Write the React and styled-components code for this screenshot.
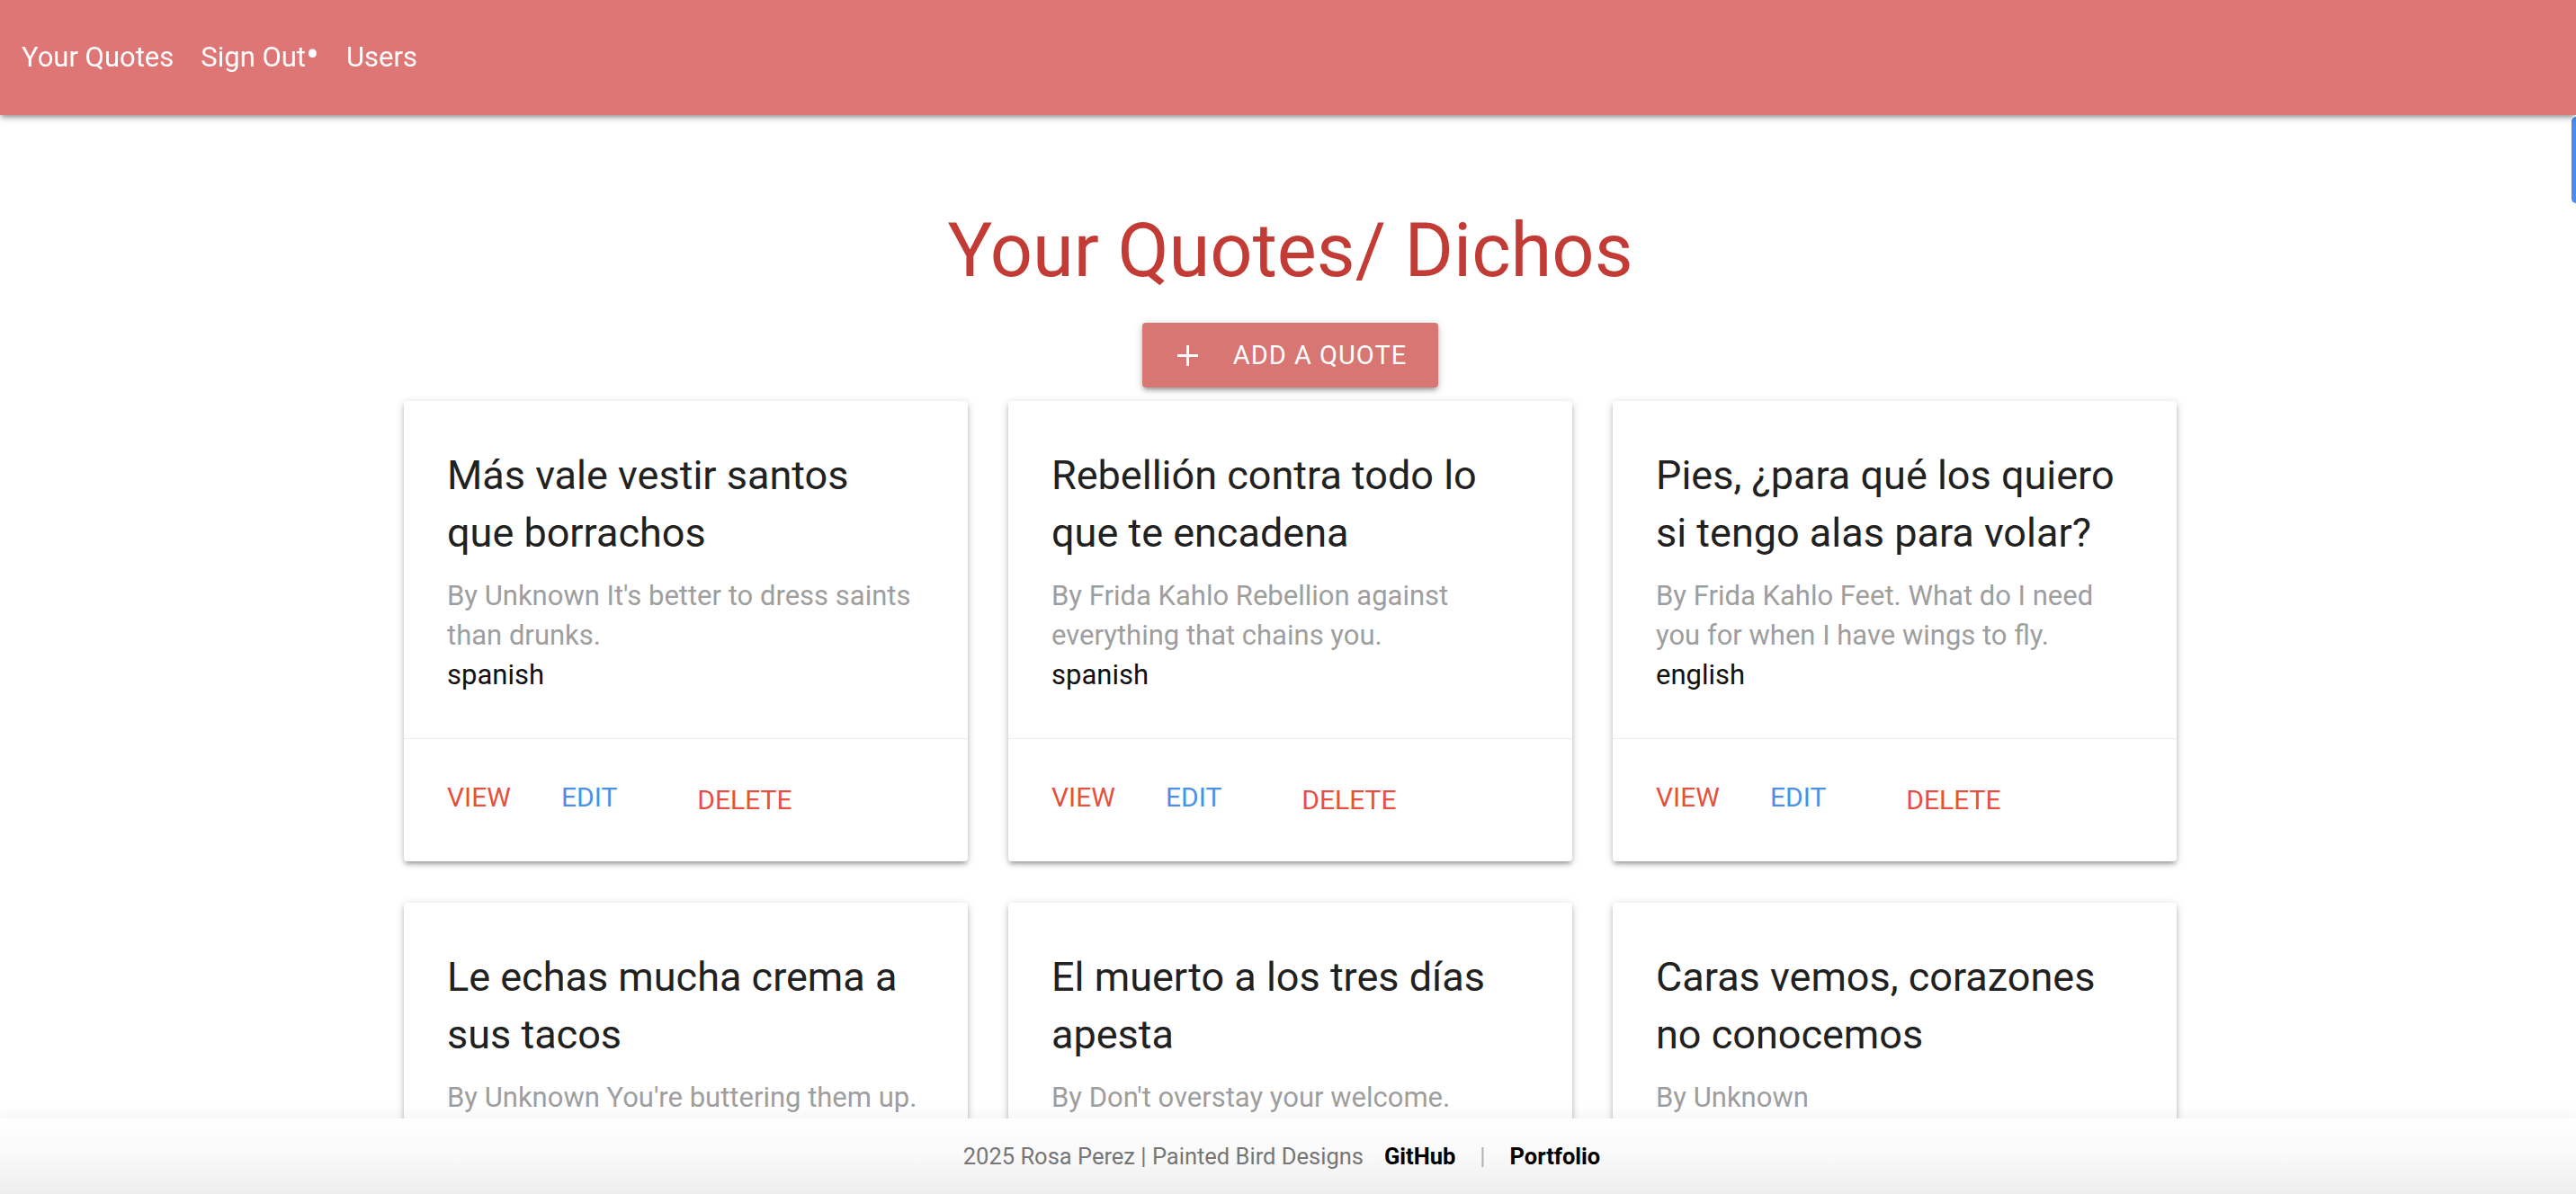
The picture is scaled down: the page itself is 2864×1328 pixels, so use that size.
import React from "react";
import styled, { createGlobalStyle } from "styled-components";

const GlobalStyle = createGlobalStyle`
  html, body {
    margin: 0;
    height: 100%;
    background: #fff;
  }
  body {
    font-family: Roboto, "Liberation Sans", sans-serif;
  }
  * {
    box-sizing: border-box;
  }
`;

const shadow = `0 4px 4px 0 rgba(0, 0, 0, 0.14), 0 6px 2px -4px rgba(0, 0, 0, 0.12),
    0 2px 10px 0 rgba(0, 0, 0, 0.2)`;

const Page = styled.div`
  height: 100vh;
  display: flex;
  flex-direction: column;
  overflow: hidden;
`;

const Nav = styled.nav`
  position: relative;
  z-index: 2;
  flex-shrink: 0;
  height: 128px;
  background: #df7676;
  box-shadow: ${shadow};
`;

const NavList = styled.ul`
  display: flex;
  margin: 0;
  padding: 0 0 0 9px;
  list-style: none;
`;

const NavLink = styled.a`
  display: block;
  padding: 0 15px;
  color: #fff;
  font-size: 31px;
  line-height: 128px;
  text-decoration: none;
`;

const Bullet = styled.span`
  font-size: 44px;
  line-height: 0;
  vertical-align: -2px;
`;

const Main = styled.main`
  flex: 1;
  overflow: hidden;
  display: flex;
  flex-direction: column;
  align-items: center;
  padding-left: 5px;

  & > * {
    flex-shrink: 0;
  }
`;

const Title = styled.h1`
  margin: 105px 0 0;
  font-size: 83px;
  font-weight: 400;
  line-height: 92px;
  color: #c23b35;
`;

const AddButton = styled.button`
  display: flex;
  align-items: center;
  gap: 39px;
  height: 72px;
  margin-top: 34px;
  padding: 0 35px 0 39px;
  border: none;
  border-radius: 4px;
  background: #d77672;
  color: #fff;
  font-family: Roboto, "Liberation Sans", sans-serif;
  font-size: 29px;
  letter-spacing: 1px;
  text-transform: uppercase;
  box-shadow: ${shadow};
`;

const Grid = styled.div`
  display: grid;
  grid-template-columns: repeat(3, 627px);
  column-gap: 45px;
  row-gap: 46px;
  margin-top: 15px;
`;

const Card = styled.div`
  background: #fff;
  border-radius: 4px;
  box-shadow: ${shadow};
`;

const CardContent = styled.div`
  padding: 51px 48px 48px;
`;

const CardTitle = styled.span`
  display: block;
  margin-bottom: 16px;
  font-size: 45px;
  line-height: 64px;
  color: #212121;
  white-space: pre-line;
`;

const CardText = styled.p`
  margin: 0;
  font-size: 31px;
  line-height: 44px;
  color: ${(p) => (p.$muted ? "#9e9e9e" : "#111")};
  white-space: pre-line;
`;

const CardAction = styled.div`
  display: flex;
  align-items: center;
  height: 137px;
  padding: 28px 48px 36px;
  border-top: 1px solid rgba(160, 160, 160, 0.2);
`;

const ActionLink = styled.a`
  margin-right: 56px;
  font-size: 30px;
  color: ${(p) => p.$color};
  text-transform: uppercase;
  text-decoration: none;
`;

const DeleteButton = styled.button`
  height: 72px;
  padding: 6px 33px 0;
  border: none;
  background: transparent;
  font-family: Roboto, "Liberation Sans", sans-serif;
  font-size: 30px;
  color: #e5503f;
  text-transform: uppercase;
`;

const Footer = styled.footer`
  position: relative;
  z-index: 2;
  flex-shrink: 0;
  height: 84px;
  display: flex;
  align-items: center;
  justify-content: center;
  padding-right: 14px;
  font-size: 25.5px;
  background: linear-gradient(180deg, #ffffff 0%, #fafafa 45%, #eeeeee 100%);
  box-shadow: 0 -6px 14px rgba(0, 0, 0, 0.04);
`;

const Copy = styled.span`
  color: #767676;
`;

const FooterLink = styled.a`
  color: #000;
  font-weight: 700;
  text-decoration: none;
  margin-left: ${(p) => p.$gap || 0}px;
`;

const Sep = styled.span`
  margin: 0 27px;
  color: #b0b0b0;
`;

const SideTab = styled.div`
  position: fixed;
  top: 130px;
  right: 0;
  width: 5px;
  height: 96px;
  border-radius: 8px 0 0 8px;
  background: #4a8cf0;
`;

const PlusIcon = () => (
  <svg width="23" height="23" viewBox="0 0 23 23">
    <path d="M11.5 0v23M0 11.5h23" stroke="#fff" strokeWidth="3" />
  </svg>
);

const quotes = [
  {
    title: "Más vale vestir santos\nque borrachos",
    text: "By Unknown It's better to dress saints\nthan drunks.",
    lang: "spanish",
  },
  {
    title: "Rebellión contra todo lo\nque te encadena",
    text: "By Frida Kahlo Rebellion against\neverything that chains you.",
    lang: "spanish",
  },
  {
    title: "Pies, ¿para qué los quiero\nsi tengo alas para volar?",
    text: "By Frida Kahlo Feet. What do I need\nyou for when I have wings to fly.",
    lang: "english",
  },
  {
    title: "Le echas mucha crema a\nsus tacos",
    text: "By Unknown You're buttering them up.",
    lang: "spanish",
  },
  {
    title: "El muerto a los tres días\napesta",
    text: "By Don't overstay your welcome.",
    lang: "spanish",
  },
  {
    title: "Caras vemos, corazones\nno conocemos",
    text: "By Unknown",
    lang: "spanish",
  },
];

const QuoteCard = ({ quote }) => (
  <Card>
    <CardContent>
      <CardTitle>{quote.title}</CardTitle>
      <CardText $muted>{quote.text}</CardText>
      <CardText>{quote.lang}</CardText>
    </CardContent>
    <CardAction>
      <ActionLink href="#" $color="#e5503f">View</ActionLink>
      <ActionLink href="#" $color="#4a90e8">Edit</ActionLink>
      <DeleteButton>Delete</DeleteButton>
    </CardAction>
  </Card>
);

const App = () => {
  return (
    <Page>
      <GlobalStyle />
      <Nav>
        <NavList>
          <li>
            <NavLink href="#">Your Quotes</NavLink>
          </li>
          <li>
            <NavLink href="#">
              Sign Out<Bullet>•</Bullet>
            </NavLink>
          </li>
          <li>
            <NavLink href="#">Users</NavLink>
          </li>
        </NavList>
      </Nav>
      <Main>
        <Title>Your Quotes/ Dichos</Title>
        <AddButton>
          <PlusIcon />
          Add a Quote
        </AddButton>
        <Grid>
          {quotes.map((q) => (
            <QuoteCard key={q.title} quote={q} />
          ))}
        </Grid>
      </Main>
      <Footer>
        <Copy>2025 Rosa Perez | Painted Bird Designs</Copy>
        <FooterLink href="#" $gap={23}>GitHub</FooterLink>
        <Sep>|</Sep>
        <FooterLink href="#">Portfolio</FooterLink>
      </Footer>
      <SideTab />
    </Page>
  );
};

export default App;
